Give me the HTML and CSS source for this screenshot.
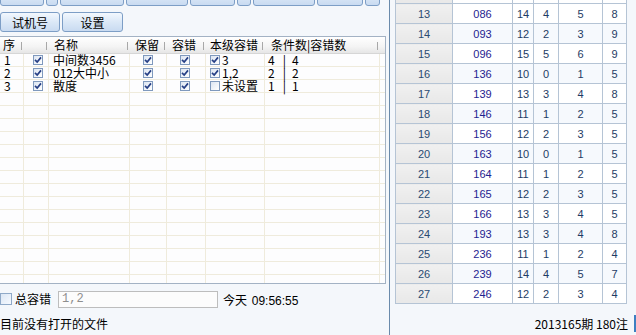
FILE: index.html
```html
<!DOCTYPE html>
<html lang="zh-CN">
<head>
  <meta charset="UTF-8" />
  <title>过滤</title>
  <link rel="stylesheet" href="styles.css">
</head>
<body>
  <div class="window">
    <div class="left">
      <div class="toolbar-top">
        <button class="btn" style="width:44px"></button>
        <button class="btn" style="width:12px"></button>
        <button class="btn" style="width:64px"></button>
        <button class="btn" style="width:62px"></button>
        <button class="btn" style="width:45px"></button>
        <button class="btn" style="width:14px"></button>
        <button class="btn" style="width:62px"></button>
        <button class="btn" style="width:46px"></button>
        <button class="btn" style="width:15px"></button>
      </div>
      <div class="toolbar">
        <button class="btn btn-shiji">试机号</button>
        <button class="btn btn-set">设置</button>
      </div>

      <div class="list">
        <div class="list-head">
          <span class="hc c-no">序</span>
          <span class="hc c-chk"></span>
          <span class="hc c-name">名称</span>
          <span class="hc c-keep">保留</span>
          <span class="hc c-err">容错</span>
          <span class="hc c-lvl">本级容错</span>
          <span class="hc c-cnt">条件数|容错数</span>
          <span class="hc c-end"></span>
        </div>
        <div class="list-body">
          <div class="row">
            <span class="c-no">1</span>
            <span class="c-chk"><i class="cb on"></i></span>
            <span class="c-name">中间数3456</span>
            <span class="c-keep"><i class="cb on"></i></span>
            <span class="c-err"><i class="cb on"></i></span>
            <span class="c-lvl"><i class="cb on"></i>3</span>
            <span class="c-cnt">4<b class="bar">|</b>4</span>
            <span class="c-end"></span>
          </div>
          <div class="row">
            <span class="c-no">2</span>
            <span class="c-chk"><i class="cb on"></i></span>
            <span class="c-name">012大中小</span>
            <span class="c-keep"><i class="cb on"></i></span>
            <span class="c-err"><i class="cb on"></i></span>
            <span class="c-lvl"><i class="cb on"></i>1,2</span>
            <span class="c-cnt">2<b class="bar">|</b>2</span>
            <span class="c-end"></span>
          </div>
          <div class="row">
            <span class="c-no">3</span>
            <span class="c-chk"><i class="cb on"></i></span>
            <span class="c-name">散度</span>
            <span class="c-keep"><i class="cb on"></i></span>
            <span class="c-err"><i class="cb on"></i></span>
            <span class="c-lvl"><i class="cb"></i>未设置</span>
            <span class="c-cnt">1<b class="bar">|</b>1</span>
            <span class="c-end"></span>
          </div>
          <div class="row"><span class="c-no"></span><span class="c-chk"></span><span class="c-name"></span><span class="c-keep"></span><span class="c-err"></span><span class="c-lvl"></span><span class="c-cnt"></span><span class="c-end"></span></div>
          <div class="row"><span class="c-no"></span><span class="c-chk"></span><span class="c-name"></span><span class="c-keep"></span><span class="c-err"></span><span class="c-lvl"></span><span class="c-cnt"></span><span class="c-end"></span></div>
          <div class="row"><span class="c-no"></span><span class="c-chk"></span><span class="c-name"></span><span class="c-keep"></span><span class="c-err"></span><span class="c-lvl"></span><span class="c-cnt"></span><span class="c-end"></span></div>
          <div class="row"><span class="c-no"></span><span class="c-chk"></span><span class="c-name"></span><span class="c-keep"></span><span class="c-err"></span><span class="c-lvl"></span><span class="c-cnt"></span><span class="c-end"></span></div>
          <div class="row"><span class="c-no"></span><span class="c-chk"></span><span class="c-name"></span><span class="c-keep"></span><span class="c-err"></span><span class="c-lvl"></span><span class="c-cnt"></span><span class="c-end"></span></div>
          <div class="row"><span class="c-no"></span><span class="c-chk"></span><span class="c-name"></span><span class="c-keep"></span><span class="c-err"></span><span class="c-lvl"></span><span class="c-cnt"></span><span class="c-end"></span></div>
          <div class="row"><span class="c-no"></span><span class="c-chk"></span><span class="c-name"></span><span class="c-keep"></span><span class="c-err"></span><span class="c-lvl"></span><span class="c-cnt"></span><span class="c-end"></span></div>
          <div class="row"><span class="c-no"></span><span class="c-chk"></span><span class="c-name"></span><span class="c-keep"></span><span class="c-err"></span><span class="c-lvl"></span><span class="c-cnt"></span><span class="c-end"></span></div>
          <div class="row"><span class="c-no"></span><span class="c-chk"></span><span class="c-name"></span><span class="c-keep"></span><span class="c-err"></span><span class="c-lvl"></span><span class="c-cnt"></span><span class="c-end"></span></div>
          <div class="row"><span class="c-no"></span><span class="c-chk"></span><span class="c-name"></span><span class="c-keep"></span><span class="c-err"></span><span class="c-lvl"></span><span class="c-cnt"></span><span class="c-end"></span></div>
          <div class="row"><span class="c-no"></span><span class="c-chk"></span><span class="c-name"></span><span class="c-keep"></span><span class="c-err"></span><span class="c-lvl"></span><span class="c-cnt"></span><span class="c-end"></span></div>
          <div class="row"><span class="c-no"></span><span class="c-chk"></span><span class="c-name"></span><span class="c-keep"></span><span class="c-err"></span><span class="c-lvl"></span><span class="c-cnt"></span><span class="c-end"></span></div>
          <div class="row"><span class="c-no"></span><span class="c-chk"></span><span class="c-name"></span><span class="c-keep"></span><span class="c-err"></span><span class="c-lvl"></span><span class="c-cnt"></span><span class="c-end"></span></div>
          <div class="row"><span class="c-no"></span><span class="c-chk"></span><span class="c-name"></span><span class="c-keep"></span><span class="c-err"></span><span class="c-lvl"></span><span class="c-cnt"></span><span class="c-end"></span></div>
          <div class="row"><span class="c-no"></span><span class="c-chk"></span><span class="c-name"></span><span class="c-keep"></span><span class="c-err"></span><span class="c-lvl"></span><span class="c-cnt"></span><span class="c-end"></span></div>
        </div>
      </div>

      <div class="bottom-row">
        <i class="cb big"></i>
        <span class="total-label">总容错</span>
        <input class="total-input" type="text" value="1,2" />
        <span class="today">今天 <span class="time">09:56:55</span></span>
      </div>

      <div class="status">目前没有打开的文件</div>
    </div>

    <div class="divider"></div>

    <div class="right">
      <table class="grid">
        <colgroup>
          <col style="width:57px"><col style="width:60px"><col style="width:21px">
          <col style="width:25px"><col style="width:44px"><col style="width:24px">
        </colgroup>
        <!-- row 12 is scrolled almost out of view -->
        <tr><td class="idx"></td><td class="num"></td><td></td><td></td><td></td><td></td></tr>
        <tr><td class="idx">13</td><td class="num">086</td><td>14</td><td>4</td><td>5</td><td>8</td></tr>
        <tr class="alt"><td class="idx">14</td><td class="num">093</td><td>12</td><td>2</td><td>3</td><td>9</td></tr>
        <tr><td class="idx">15</td><td class="num">096</td><td>15</td><td>5</td><td>6</td><td>9</td></tr>
        <tr class="alt"><td class="idx">16</td><td class="num">136</td><td>10</td><td>0</td><td>1</td><td>5</td></tr>
        <tr><td class="idx">17</td><td class="num">139</td><td>13</td><td>3</td><td>4</td><td>8</td></tr>
        <tr class="alt"><td class="idx">18</td><td class="num">146</td><td>11</td><td>1</td><td>2</td><td>5</td></tr>
        <tr><td class="idx">19</td><td class="num">156</td><td>12</td><td>2</td><td>3</td><td>5</td></tr>
        <tr class="alt"><td class="idx">20</td><td class="num">163</td><td>10</td><td>0</td><td>1</td><td>5</td></tr>
        <tr><td class="idx">21</td><td class="num">164</td><td>11</td><td>1</td><td>2</td><td>5</td></tr>
        <tr class="alt"><td class="idx">22</td><td class="num">165</td><td>12</td><td>2</td><td>3</td><td>5</td></tr>
        <tr><td class="idx">23</td><td class="num">166</td><td>13</td><td>3</td><td>4</td><td>5</td></tr>
        <tr class="alt"><td class="idx">24</td><td class="num">193</td><td>13</td><td>3</td><td>4</td><td>8</td></tr>
        <tr><td class="idx">25</td><td class="num">236</td><td>11</td><td>1</td><td>2</td><td>4</td></tr>
        <tr class="alt"><td class="idx">26</td><td class="num">239</td><td>14</td><td>4</td><td>5</td><td>7</td></tr>
        <tr><td class="idx">27</td><td class="num">246</td><td>12</td><td>2</td><td>3</td><td>4</td></tr>
      </table>

      <div class="status status-right">
        <span>2013165期 180注</span>
        <span class="edge"></span>
      </div>
    </div>
  </div>
</body>
</html>
```

FILE: styles.css
```css
* {
  box-sizing: border-box;
  margin: 0;
  padding: 0;
}

body {
  width: 636px;
  height: 335px;
  overflow: hidden;
  background-color: #f4f7fb;
  font-family: "Noto Sans CJK SC", "DejaVu Sans", sans-serif;
  font-size: 12px;
  color: #000;
}

.window {
  display: flex;
  height: 335px;
}

/* ---------- left side ---------- */

.left {
  width: 389px;
  display: flex;
  flex-direction: column;
}

.divider {
  width: 1px;
  background-color: #6a8aab;
}

.btn {
  height: 20px;
  border: 1px solid #7d9ec6;
  border-radius: 3px;
  background: linear-gradient(#f3f8fe, #dbe8f7 50%, #c9dbf1);
  font-family: "Noto Sans CJK SC", sans-serif;
  font-size: 12px;
  line-height: 17px;
  color: #000;
}

.toolbar-top {
  height: 6px;
  display: flex;
  align-items: flex-end;
  gap: 2px;
  overflow: hidden;
}

.toolbar-top .btn {
  flex: none;
}

.toolbar {
  display: flex;
  gap: 2px;
  margin-top: 6px;
}

.btn-shiji { width: 60px; }
.btn-set { width: 61px; }

.list {
  margin-top: 4px;
  width: 386px;
  height: 248px;
  border: 1px solid #a3b2c4;
  border-left: none;
  background-color: #fdfdfe;
  overflow: hidden;
}

.list-head,
.row {
  display: grid;
  grid-template-columns: 24px 25px 81px 37px 39px 59px 115px 1fr;
}

.list-head {
  height: 17px;
  background: linear-gradient(#ffffff, #f4f4f4 60%, #e6e6e6);
  border-bottom: 1px solid #d6d6d6;
}

.hc {
  position: relative;
  line-height: 16px;
  padding-left: 5px;
  white-space: nowrap;
}

.hc::after {
  content: "";
  position: absolute;
  right: 2px;
  top: 5px;
  width: 1px;
  height: 8px;
  background-color: #a8a8a8;
}

.hc.c-no { padding-left: 3px; }
.hc.c-lvl { padding-left: 4px; }
.hc.c-cnt { padding-left: 6px; }
.hc.c-end::after { display: none; }

.row {
  height: 13px;
}

.row > span {
  display: flex;
  align-items: center;
  height: 13px;
  line-height: 12px;
  border-right: 1px solid #efebdc;
  border-bottom: 1px solid #efebdc;
  white-space: nowrap;
}

.row > span.c-end { border-right: none; }

.row .c-no { padding-left: 4px; }
.row .c-chk { padding-left: 9px; }
.row .c-name { padding-left: 4px; }
.row .c-keep { padding-left: 13px; }
.row .c-err { padding-left: 13px; }
.row .c-lvl { padding-left: 4px; }
.row .c-cnt { padding-left: 3px; }

.bar {
  font-weight: normal;
  margin: 0 6px 0 8px;
}

/* checkboxes */
.cb {
  display: inline-block;
  flex: none;
  width: 10px;
  height: 10px;
  margin-right: 2px;
  border: 1px solid #7f99bd;
  background: linear-gradient(135deg, #dce5f2, #ffffff);
}

.cb.on {
  background:
    url("data:image/svg+xml;utf8,<svg xmlns='http://www.w3.org/2000/svg' width='8' height='8'><path d='M1 3.8 L3.2 6 L7 1.4' fill='none' stroke='%23263f85' stroke-width='1.7'/></svg>") center / 8px 8px no-repeat,
    linear-gradient(135deg, #dce5f2, #ffffff);
}

.cb.big {
  width: 12px;
  height: 12px;
  margin-right: 3px;
  border-color: #8fa9c8;
  background: linear-gradient(135deg, #dbe6f4, #f7faff);
}

.bottom-row {
  display: flex;
  align-items: center;
  height: 18px;
  margin-top: 6px;
}

.total-label {
  line-height: 14px;
}

.total-input {
  width: 160px;
  height: 17px;
  margin-left: 7px;
  padding-left: 3px;
  border: 1px solid #bdbdbd;
  background-color: #fcfcfc;
  font-family: "Liberation Mono", monospace;
  font-size: 12px;
  color: #8e8e8e;
}

.today {
  margin-left: 5px;
}

.time {
  margin-left: 2px;
  font-family: "Liberation Sans", sans-serif;
  font-size: 12px;
}

.status {
  flex: 1;
  display: flex;
  align-items: center;
  padding-top: 3px;
  white-space: nowrap;
}

/* ---------- right side ---------- */

.right {
  flex: 1;
  display: flex;
  flex-direction: column;
}

.grid {
  margin-top: -17px;
  margin-left: 5px;
  width: 231px;
  border-collapse: collapse;
  table-layout: fixed;
  font-family: "Liberation Sans", sans-serif;
  font-size: 11px;
  color: #1e3c64;
  background-color: #ffffff;
}

.grid tr {
  height: 20px;
}

.grid td {
  border: 1px solid #b5c4d5;
  text-align: center;
  padding: 1px 0 0;
}

.grid tr.alt td {
  background-color: #f6f9fd;
}

.grid td.idx,
.grid tr.alt td.idx {
  background: linear-gradient(#f0f0f0, #e8e8e8);
  color: #2a4b72;
}

.grid td.num {
  color: #1f2390;
}

.status-right {
  justify-content: flex-end;
  align-items: center;
  padding-top: 8px;
}

.edge {
  flex: none;
  width: 2px;
  height: 17px;
  margin-left: 6px;
  background-color: #3d7fc1;
}
```
